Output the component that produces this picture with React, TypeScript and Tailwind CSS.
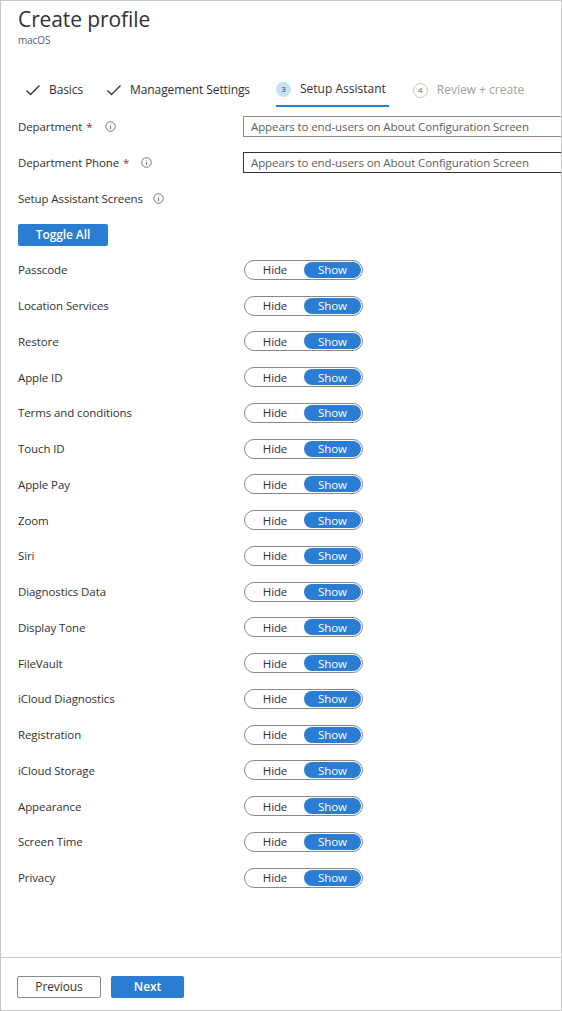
import React from 'react'

const screens = [
  'Passcode',
  'Location Services',
  'Restore',
  'Apple ID',
  'Terms and conditions',
  'Touch ID',
  'Apple Pay',
  'Zoom',
  'Siri',
  'Diagnostics Data',
  'Display Tone',
  'FileVault',
  'iCloud Diagnostics',
  'Registration',
  'iCloud Storage',
  'Appearance',
  'Screen Time',
  'Privacy',
]

function Check() {
  return (
    <svg width="16" height="16" viewBox="0 0 16 16" fill="none" stroke="#323130" strokeWidth="1.3">
      <path d="M1.5 8.5 L5.5 12.5 L14.5 3.5" />
    </svg>
  )
}

function Info() {
  return (
    <svg width="11" height="11" viewBox="0 0 12 12" fill="none" stroke="#605e5c" strokeWidth="0.9">
      <circle cx="6" cy="6" r="5.2" />
      <path d="M6 5.2 V8.8" />
      <circle cx="6" cy="3.6" r="0.5" fill="#605e5c" stroke="none" />
    </svg>
  )
}

function Required() {
  return <span className="text-[#a4262c] ml-[4px]">*</span>
}

function Toggle() {
  return (
    <div className="flex items-center w-[119px] h-[20px] rounded-full border border-[#8a8886] p-[1px]">
      <span className="w-[58px] text-center text-[11.5px] text-[#323130]">Hide</span>
      <span className="w-[57px] h-[16px] flex items-center justify-center rounded-full bg-[#2b7cd3] text-[11.5px] text-white">
        Show
      </span>
    </div>
  )
}

export default function App() {
  return (
    <div
      className="w-[562px] h-[1011px] border border-[#c8c8c8] bg-white flex flex-col text-[#323130] overflow-hidden tracking-[-0.1px]"
      style={{ fontFamily: '"Segoe UI", "Open Sans", sans-serif' }}
    >
      <div className="flex-1 pl-[17px]">
        <h1 className="text-[21px] leading-[26px] mt-[5px] text-[#323130]">Create profile</h1>
        <div className="text-[10px] leading-[12px] text-[#605e5c] mt-[2px]">macOS</div>

        <div className="flex items-center mt-[27px] h-[34px] text-[12px]">
          <div className="flex items-center ml-[7px] gap-[8px]">
            <Check />
            <span>Basics</span>
          </div>
          <div className="flex items-center ml-[23px] gap-[8px]">
            <Check />
            <span>Management Settings</span>
          </div>
          <div className="flex items-center ml-[26px] h-full gap-[9px] border-b-2 border-[#2b7cd3] pr-[3px]">
            <span className="w-[15px] h-[15px] rounded-full bg-[#c7e0f4] text-[8px] flex items-center justify-center text-[#323130]">
              3
            </span>
            <span className="tracking-[0px]">Setup Assistant</span>
          </div>
          <div className="flex items-center ml-[24px] gap-[9px] text-[#a19f9d]">
            <span className="w-[15px] h-[15px] rounded-full border border-[#c8c6c4] text-[8px] flex items-center justify-center text-[#605e5c]">
              4
            </span>
            <span className="tracking-[0px]">Review + create</span>
          </div>
        </div>

        <div className="text-[11.5px]">
          <div className="flex items-center h-[21px] mt-[9px]">
            <div className="w-[225px] flex items-center">
              Department<Required />
              <span className="ml-[12px] flex"><Info /></span>
            </div>
            <div className="flex-1 h-[21px] border border-[#8a8886] border-r-0 px-[7px] flex items-center text-[#605e5c]">
              Appears to end-users on About Configuration Screen
            </div>
          </div>
          <div className="flex items-center h-[21px] mt-[15px]">
            <div className="w-[225px] flex items-center">
              Department Phone<Required />
              <span className="ml-[12px] flex"><Info /></span>
            </div>
            <div className="flex-1 h-[21px] border border-[#323130] border-r-0 px-[7px] flex items-center text-[#605e5c]">
              Appears to end-users on About Configuration Screen
            </div>
          </div>
          <div className="flex items-center h-[21px] mt-[15px]">
            Setup Assistant Screens
            <span className="ml-[10px] flex"><Info /></span>
          </div>

          <button className="mt-[15px] w-[90px] h-[22px] rounded-[2px] bg-[#2b7cd3] text-white font-semibold text-[12px]">
            Toggle All
          </button>

          <div className="mt-[6px] flex flex-col">
            {screens.map(s => (
              <div key={s} className="flex items-center h-[35.75px]">
                <div className="w-[226px]">{s}</div>
                <Toggle />
              </div>
            ))}
          </div>
        </div>
      </div>

      <div className="h-[53px] border-t border-[#c8c8c8] flex items-center pl-[16px] gap-[10px] text-[12px] pt-[6px]">
        <button className="w-[84px] h-[22px] border border-[#8a8886] rounded-[2px] text-[#323130]">Previous</button>
        <button className="w-[73px] h-[22px] rounded-[2px] bg-[#2b7cd3] text-white font-semibold">Next</button>
      </div>
    </div>
  )
}
